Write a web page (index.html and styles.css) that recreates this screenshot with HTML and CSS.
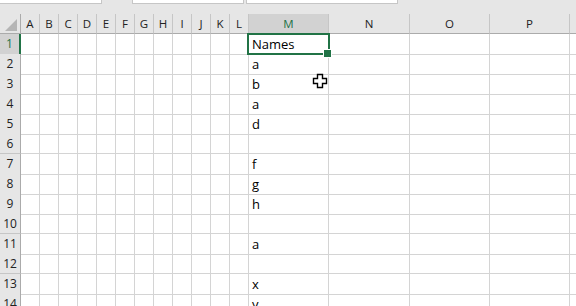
FILE: index.html
```html
<!DOCTYPE html>
<html lang="en">
<head>
  <meta charset="UTF-8" />
  <title>Sheet1</title>
  <link rel="stylesheet" href="styles.css">
</head>
<body>
  <div class="topbar">
    <div class="box box-name"></div>
    <div class="box box-mid"></div>
    <div class="box box-formula"></div>
  </div>
  <div class="header-gap"></div>
  <div id="sheet" class="sheet">
    <div class="row head-row">
      <div class="corner"><span class="corner-tri"></span></div>
    </div>
  </div>

  <svg class="cursor" width="16" height="16" viewBox="0 0 16 16">
    <path d="M5.5 1.5h5v4h4v5h-4v4h-5v-4h-4v-5h4z" fill="#fff" stroke="#000" stroke-width="1.4" stroke-linejoin="miter"/>
  </svg>

  <script>
    const cols = ['A','B','C','D','E','F','G','H','I','J','K','L','M','N','O','P',''];
    const names = ['Names','a','b','a','d','','f','g','h','','a','','x','y'];

    const sheet = document.getElementById('sheet');
    const headRow = sheet.querySelector('.head-row');

    cols.forEach(c => {
      const h = document.createElement('div');
      h.className = 'col-head' + (c === 'M' ? ' sel' : '');
      h.textContent = c;
      headRow.appendChild(h);
    });

    names.forEach((name, i) => {
      const row = document.createElement('div');
      row.className = 'row';

      const num = document.createElement('div');
      num.className = 'row-head' + (i === 0 ? ' sel' : '');
      num.textContent = i + 1;
      row.appendChild(num);

      cols.forEach(c => {
        const cell = document.createElement('div');
        cell.className = 'cell';
        if (c === 'M') {
          cell.textContent = name;
          if (i === 0) cell.classList.add('active');
        }
        row.appendChild(cell);
      });
      sheet.appendChild(row);
    });
  </script>
</body>
</html>
```

FILE: styles.css
```css
* { box-sizing: border-box; }
html, body { margin: 0; height: 100%; overflow: hidden; }
body {
  background: #fff;
  font-family: "Open Sans", "Noto Sans", sans-serif;
  color: #000;
  position: relative;
}

.topbar {
  height: 4px;
  background: #e6e6e6;
  display: flex;
  align-items: flex-start;
}
.box {
  height: 4px;
  background: #fff;
  border-bottom: 1px solid #c6c6c6;
}
.box-name { width: 102px; border-right: 1px solid #c6c6c6; }
.box-mid { width: 112px; margin-left: 30px; border-left: 1px solid #c6c6c6; border-right: 1px solid #c6c6c6; }
.box-formula { width: 152px; margin-left: 2px; border-left: 1px solid #c6c6c6; border-right: 1px solid #c6c6c6; }

.header-gap { height: 10px; background: #e6e6e6; }

.row {
  display: grid;
  grid-template-columns: 21px repeat(12, 19px) 80px 81px 80px 80px 1fr;
  height: 20px;
}

.corner {
  background: #e6e6e6;
  border-right: 1px solid #ababab;
  border-bottom: 1px solid #ababab;
  position: relative;
}
.corner-tri {
  position: absolute;
  right: 3px;
  bottom: 2px;
  width: 0;
  height: 0;
  border-left: 12px solid transparent;
  border-bottom: 12px solid #b5b5b5;
}

.col-head {
  background: #e6e6e6;
  border-right: 1px solid #c6c6c6;
  border-bottom: 1px solid #ababab;
  font-size: 11.5px;
  line-height: 19px;
  text-align: center;
  color: #222;
}
.col-head:last-child { border-right: none; }
.col-head.sel {
  background: #d2d2d2;
  color: #217346;
  border-bottom: 1px solid #217346;
}

.row-head {
  background: #e6e6e6;
  border-right: 1px solid #ababab;
  border-bottom: 1px solid #c6c6c6;
  font-size: 12px;
  line-height: 19px;
  text-align: center;
  color: #222;
}
.row-head.sel {
  background: #d2d2d2;
  color: #217346;
  border-right: 2px solid #217346;
}

.cell {
  border-right: 1px solid #d4d4d4;
  border-bottom: 1px solid #d4d4d4;
  font-size: 13px;
  line-height: 19px;
  padding: 1px 0 0 3px;
  white-space: nowrap;
}
.cell:last-child { border-right: none; }

.cell.active { position: relative; }
.cell.active::after {
  content: "";
  position: absolute;
  left: -2px;
  top: -1px;
  right: -2px;
  bottom: -1px;
  border: 2px solid #217346;
}
.cell.active::before {
  content: "";
  position: absolute;
  right: -4px;
  bottom: -4px;
  width: 7px;
  height: 7px;
  background: #217346;
  border: 1px solid #fff;
  z-index: 1;
}

.cursor {
  position: absolute;
  left: 312px;
  top: 73px;
}
```
